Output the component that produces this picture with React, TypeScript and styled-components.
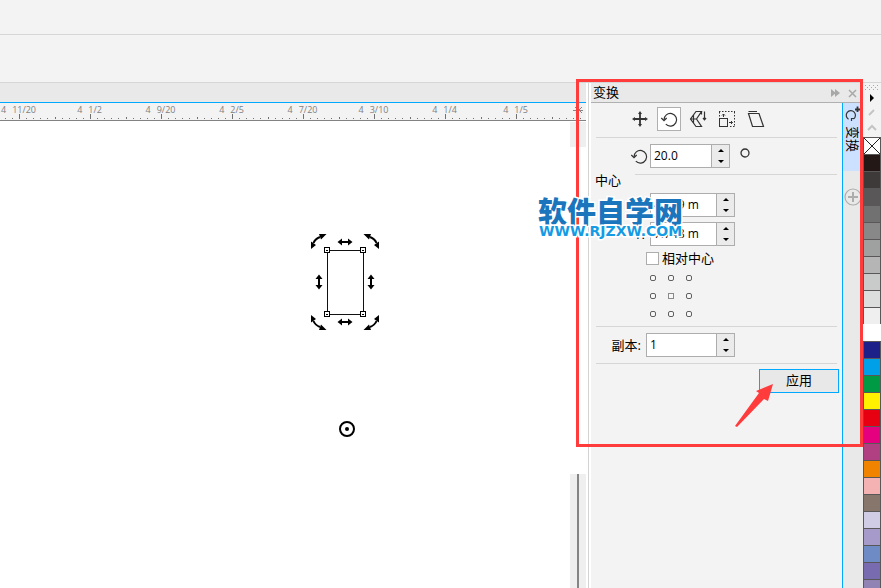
import React from "react";
import styled, { createGlobalStyle } from "styled-components";

const UI_FONT = '"Open Sans", "Noto Sans CJK SC", sans-serif';
const ACCENT = "#00a8ff";
const MARK = "#ff3b3b";

const GlobalStyle = createGlobalStyle`
  * { box-sizing: border-box; }
  body { margin: 0; background: #fff; font-family: ${UI_FONT}; font-size: 13px; color: #000; }
  button, input { font: inherit; color: inherit; padding: 0; margin: 0; border-radius: 0; }
  svg { display: block; }
`;

const Window = styled.div`
  display: flex;
  flex-direction: column;
  height: 100vh;
  overflow: hidden;
`;

const Bar = styled.div<{ $height: number }>`
  flex: none;
  height: ${(p) => p.$height}px;
  background: #f3f3f3;
  border-bottom: 1px solid #d6d6d6;
`;

const Workspace = styled.main`
  flex: 1;
  display: flex;
  min-height: 0;
`;

const Document = styled.section`
  flex: 1;
  min-width: 0;
  display: flex;
  flex-direction: column;
`;

const DocumentTabs = styled.div`
  flex: none;
  height: 20px;
  background: #e9e9e9;
  border-bottom: 1px solid ${ACCENT};
`;

const Ruler = styled.div`
  flex: none;
  display: flex;
  position: relative;
  height: 18px;
  overflow: hidden;
  background: #f3f3f3;
  border-bottom: 1px solid #828282;
`;

const RulerCell = styled.div`
  flex: none;
  width: 71px;
  height: 17px;

  &:first-child { margin-left: -16px; }
`;

const RulerLabel = styled.div`
  display: flex;
  justify-content: center;
  gap: 6px;
  height: 11px;
  padding-right: 2px;
  font-size: 9px;
  line-height: 13px;
  color: #808080;
`;

const RulerEnd = styled.svg`
  position: absolute;
  right: 2px;
  top: 3px;
`;

const Stage = styled.div`
  flex: 1;
  display: flex;
  min-height: 0;
`;

const Canvas = styled.div`
  flex: 1;
  position: relative;
  min-width: 0;
  overflow: hidden;
  background: #fff;
`;

const Drawing = styled.svg`
  position: absolute;
  left: 306px;
  top: 107px;
`;

const Scroll = styled.div`
  flex: none;
  display: flex;
  flex-direction: column;
  width: 16px;
  padding-top: 1px;
`;

const ScrollCap = styled.div`
  height: 25px;
  background: #efefef;
`;

const ScrollThumb = styled.div`
  height: 327px;
`;

const ScrollTrack = styled.div`
  flex: 1;
  display: flex;
  justify-content: center;
  background: #efefef;

  &::after {
    content: "";
    width: 2px;
    background: #858585;
  }
`;

const Docker = styled.aside`
  flex: none;
  position: relative;
  display: flex;
  width: 277px;
  padding-left: 2px;
`;

const Panel = styled.div`
  flex: 1;
  display: flex;
  flex-direction: column;
  background: #f3f3f3;
  border-left: 1px solid #d3d3d3;
  box-shadow: inset 2px 0 0 #fff;
  padding-left: 2px;
`;

const TitleBar = styled.header`
  flex: none;
  display: flex;
  align-items: center;
  height: 20px;
  padding-left: 2px;
  background: #e9e9e9;
  border-bottom: 1px solid #b0b0b0;
  line-height: 18px;
`;

const Title = styled.h1`
  flex: 1;
  margin: 0;
  padding-bottom: 2px;
  font-size: 13px;
  font-weight: 400;
`;

const TitleButton = styled.button`
  display: grid;
  place-items: center;
  width: 16px;
  height: 16px;
  border: 0;
  background: none;
`;

const CollapseButton = styled(TitleButton)`
  width: 13px;
`;

const Tools = styled.div`
  display: flex;
  gap: 5px;
  padding: 4px 0 6px 37px;
`;

const ToolButton = styled.button<{ $active?: boolean }>`
  display: grid;
  place-items: center;
  width: 24px;
  height: 24px;
  border: 1px solid ${(p) => (p.$active ? "#b0b0b0" : "transparent")};
  background: ${(p) => (p.$active ? "#fff" : "none")};
`;

const Rule = styled.hr`
  flex: 1 0 auto;
  height: 1px;
  margin: 0;
  border: 0;
  background: #d6d6d6;
`;

const RuleLine = styled.div`
  display: flex;
  padding: 0 5px;
`;

const Group = styled.div`
  display: flex;
  gap: 14px;
  height: 14px;
  padding: 0 5px 0 4px;
  line-height: 12px;
`;

const Row = styled.div`
  display: flex;
  align-items: center;
  margin: 6px 0;
`;

const Fields = styled.div`
  display: flex;
  flex-direction: column;
  gap: 5px;
  padding: 5px 0;
`;

const FieldRow = styled.div`
  display: flex;
  align-items: center;
`;

const RowLabel = styled.label<{ $width: number }>`
  flex: none;
  display: flex;
  justify-content: flex-end;
  width: ${(p) => p.$width}px;
  padding-right: 5px;
  line-height: 20px;

  svg { margin-right: -3px; }
`;

const Spin = styled.div<{ $width: number }>`
  display: flex;
  width: ${(p) => p.$width}px;
  height: 24px;
  border: 1px solid #adadad;
  background: #fff;
`;

const SpinInput = styled.input`
  flex: 1;
  min-width: 0;
  padding: 0 0 2px 3px;
  border: 0;
  outline: 0;
  background: none;
  font-size: 12px;
`;

const SpinButtons = styled.div`
  display: flex;
  flex-direction: column;
  width: 18px;
  border-left: 1px solid #adadad;
  background: #ebebeb;
`;

const SpinButton = styled.button`
  flex: 1;
  display: grid;
  place-items: center;
  border: 0;
  background: none;
`;

const Unit = styled.svg`
  margin: 0 0 6px 10px;
`;

const CheckRow = styled.div`
  display: flex;
  align-items: center;
  gap: 3px;
  height: 15px;
  margin-bottom: 3px;
  padding-left: 55px;
  line-height: 15px;
`;

const Check = styled.input`
  appearance: none;
  width: 13px;
  height: 13px;
  border: 1px solid #adadad;
  background: #fff;
`;

const Anchors = styled.div`
  display: grid;
  grid-template-columns: repeat(3, 18px);
  grid-auto-rows: 18px;
  margin-bottom: 3px;
  padding-left: 53px;
`;

const Anchor = styled.input<{ $square?: boolean }>`
  appearance: none;
  place-self: center;
  width: 6px;
  height: 6px;
  margin: 0;
  border: 1px solid ${(p) => (p.$square ? "#8a8a8a" : "#606060")};
  border-radius: ${(p) => (p.$square ? 0 : 2)}px;
  background: #f8f8f8;
`;

const Footer = styled.div`
  display: flex;
  justify-content: flex-end;
  padding: 5px 3px 0;
`;

const ApplyButton = styled.button`
  width: 80px;
  height: 24px;
  padding-bottom: 3px;
  border: 1px solid ${ACCENT};
  background: #e8e8e8;
  line-height: 18px;
`;

const TabStrip = styled.nav`
  flex: none;
  display: flex;
  flex-direction: column;
  width: 21px;
  background: #e9e9e9;
`;

const CloseSlot = styled.div`
  flex: none;
  height: 20px;
  padding: 2px 0 0 2px;
  border-bottom: 1px solid #b0b0b0;
`;

const TabList = styled.div`
  flex: 1;
  border-left: 1px solid ${ACCENT};
`;

const DockTab = styled.button`
  display: flex;
  flex-direction: column;
  align-items: center;
  width: 100%;
  height: 68px;
  padding: 2px 0 0;
  border: 0;
  background: #cce0ff;
`;

const TabText = styled.span`
  writing-mode: vertical-rl;
  text-orientation: sideways;
  line-height: 18px;
  margin-top: 3px;
`;

const AddTab = styled.button`
  display: block;
  margin-top: 17px;
  padding: 0 1px;
  border: 0;
  background: none;
`;

const Palette = styled.aside`
  flex: none;
  width: 18px;
  overflow: hidden;
  background: #f3f3f3;
`;

const PaletteHead = styled.div`
  height: 54px;
`;

const Swatch = styled.button<{ $color: string; $plain?: boolean }>`
  display: block;
  width: 18px;
  height: 17px;
  border: solid ${(p) => (p.$plain ? p.$color : "#595757")};
  border-width: 1px 1px 0;
  background: ${(p) => p.$color};
`;

const MarkFrame = styled.div`
  position: absolute;
  left: -10px;
  right: 0;
  top: -4px;
  height: 368px;
  border: 3px solid ${MARK};
  pointer-events: none;
`;

const MarkArrow = styled.svg`
  position: absolute;
  right: 88px;
  top: 300px;
  pointer-events: none;
`;

const Watermark = styled.div`
  position: absolute;
  left: -48px;
  top: 110px;
  white-space: nowrap;
  pointer-events: none;
  paint-order: stroke fill;
  -webkit-text-stroke: 3px #fff;
`;

const WatermarkName = styled.div`
  font: 900 29px/34px "Noto Sans CJK SC", sans-serif;
  color: #1b75bc;
`;

const WatermarkSite = styled.div`
  padding-left: 1px;
  font: 700 14px/8px "DejaVu Sans", sans-serif;
  color: #159be4;
`;

const RULER_MARKS = ["11/20", "1/2", "9/20", "2/5", "7/20", "3/10", "1/4", "1/5", ""];

const COLORS = [
  "#231815", "#3e3a39", "#595757", "#727171", "#888888", "#9fa0a0", "#b5b5b6", "#c9caca",
  "#dcdddd", "#efefef", "#ffffff", "#1d2088", "#00a0e9", "#009944", "#fff100", "#e60012",
  "#e4007f", "#b04082", "#f08300", "#f5b2b2", "#87766b", "#d0cce5", "#a59aca", "#6f8bc6",
  "#796baf", "#9184b5",
];

const RulerTicks = () => (
  <svg width="71" height="6" stroke="#707070" shapeRendering="crispEdges">
    <path d="M35.5 0V5M.5 3V5" />
    <path d="M7.5 4V5M14.5 4V5M21.5 4V5M28.5 4V5M42.5 4V5M49.5 4V5M56.5 4V5M63.5 4V5" />
  </svg>
);

const RotateIcon = () => (
  <svg width="18" height="18" viewBox="0 0 18 18" fill="none" stroke="#333" strokeWidth="1.2">
    <path d="M4 10A6.3 6.3 0 1 1 5.8 14.2" />
    <path d="M1.3 8L4 10.7L6.7 8" />
  </svg>
);

const MoveIcon = () => (
  <svg width="18" height="18" viewBox="0 0 18 18" fill="#333" stroke="#333">
    <path d="M9 3V15M3 9H15" strokeWidth="1.8" />
    <path d="M9 1L11 4H7ZM9 17L7 14H11ZM1 9L4 7V11ZM17 9L14 11V7Z" stroke="none" />
  </svg>
);

const MirrorIcon = () => (
  <svg width="18" height="18" viewBox="0 0 18 18" fill="none" stroke="#333" strokeWidth="1.2">
    <path d="M12.5 1.5H7L1.5 9L7 16.5H12.5L7.5 9ZM1.5 9H7.500M12.5 1.5V4.5M4.500 5L4.500 13" />
    <path d="M15.500 1.500V9.500M14 8L15.500 9.800L17 8" />
  </svg>
);

const SizeIcon = () => (
  <svg width="18" height="18" viewBox="0 0 18 18" fill="none" stroke="#333">
    <path d="M1 1.5H17M16.5 2V17M1.5 2V7M12 16.5H17" strokeDasharray="1.5 1.5" />
    <rect x="1.5" y="8.5" width="8" height="8" />
    <path d="M5.5 7V4M4 5.5L5.5 4L7 5.5M11 12.5H14.5M13 11L14.5 12.5L13 14" />
  </svg>
);

const SkewIcon = () => (
  <svg width="18" height="18" viewBox="0 0 18 18" fill="none" stroke="#333" strokeWidth="1.2">
    <path d="M1.5 3.5H12L16.5 16.5H5.5ZM1.5 1.5H10" />
  </svg>
);

const TOOLS = [
  { name: "位置", Icon: MoveIcon },
  { name: "旋转", Icon: RotateIcon, active: true },
  { name: "缩放和镜像", Icon: MirrorIcon },
  { name: "大小", Icon: SizeIcon },
  { name: "倾斜", Icon: SkewIcon },
];

const Spinner = ({ id, value, width }: { id: string; value: string; width: number }) => (
  <Spin $width={width}>
    <SpinInput id={id} defaultValue={value} />
    <SpinButtons>
      <SpinButton aria-label="增加">
        <svg width="6" height="3"><path d="M3 0L6 3H0Z" /></svg>
      </SpinButton>
      <SpinButton aria-label="减少">
        <svg width="6" height="3"><path d="M3 3L6 0H0Z" /></svg>
      </SpinButton>
    </SpinButtons>
  </Spin>
);

const Selection = () => (
  <Drawing width="80" height="220" viewBox="306 228 80 220">
    <defs>
      <g id="straight">
        <path d="M-5 0H5" stroke="#000" strokeWidth="2" />
        <path d="M-7.500 0L-3 -3.500V3.500ZM7.500 0L3 -3.500V3.500Z" />
      </g>
      <g id="curved">
        <path d="M320 237Q315 239 313.500 243" fill="none" stroke="#000" strokeWidth="2" />
        <path d="M326.500 234L319 234L321 239.500ZM311 249L311 241.500L316 245Z" />
      </g>
    </defs>
    <rect x="327.500" y="250.500" width="36" height="64" fill="none" stroke="#111" shapeRendering="crispEdges" />
    <g fill="#fff" stroke="#000" shapeRendering="crispEdges">
      <rect x="324.500" y="247.500" width="5" height="5" />
      <rect x="360.500" y="247.500" width="5" height="5" />
      <rect x="324.500" y="311.500" width="5" height="5" />
      <rect x="360.500" y="311.500" width="5" height="5" />
    </g>
    <path d="M326 250.500H328M362 250.500H364M326 314.500H328M362 314.500H364" stroke="#000" />
    <use href="#straight" transform="translate(345 242)" />
    <use href="#straight" transform="translate(345 322)" />
    <use href="#straight" transform="translate(319 282) rotate(90)" />
    <use href="#straight" transform="translate(371 282) rotate(90)" />
    <use href="#curved" />
    <use href="#curved" transform="translate(690 0) scale(-1 1)" />
    <use href="#curved" transform="translate(0 564) scale(1 -1)" />
    <use href="#curved" transform="translate(690 564) scale(-1 -1)" />
    <circle cx="347" cy="429" r="7" fill="none" stroke="#000" strokeWidth="2" />
    <circle cx="347" cy="429" r="2" />
  </Drawing>
);

export default function App() {
  return (
    <>
      <GlobalStyle />
      <Window>
        <Bar $height={35} />
        <Bar $height={48} />
        <Workspace>
          <Document>
            <DocumentTabs />
            <Ruler>
              {RULER_MARKS.map((mark) => (
                <RulerCell key={mark}>
                  <RulerLabel>
                    {mark && <span>4</span>}
                    <span>{mark}</span>
                  </RulerLabel>
                  <RulerTicks />
                </RulerCell>
              ))}
              <RulerEnd width="11" height="8" fill="none" stroke="#858585">
                <path d="M0 4.500H10M2 1L5 4L3 7M9 1L6 4L9 7" />
              </RulerEnd>
            </Ruler>
            <Stage>
              <Canvas>
                <Selection />
              </Canvas>
              <Scroll>
                <ScrollCap />
                <ScrollThumb />
                <ScrollTrack />
              </Scroll>
            </Stage>
          </Document>

          <Docker>
            <Panel>
              <TitleBar>
                <Title>变换</Title>
                <CollapseButton aria-label="折叠">
                  <svg width="9" height="8" fill="#a8a8a8"><path d="M0 0L5 4L0 8ZM4 0L9 4L4 8Z" /></svg>
                </CollapseButton>
              </TitleBar>
              <Tools>
                {TOOLS.map(({ name, Icon, active }) => (
                  <ToolButton key={name} $active={active} aria-label={name}>
                    <Icon />
                  </ToolButton>
                ))}
              </Tools>
              <RuleLine><Rule /></RuleLine>
              <Row>
                <RowLabel $width={59} htmlFor="angle" aria-label="角度"><RotateIcon /></RowLabel>
                <Spinner id="angle" value="20.0" width={80} />
                <Unit width="10" height="10" fill="none" stroke="#333" strokeWidth="1.300">
                  <circle cx="5" cy="5" r="4" />
                </Unit>
              </Row>
              <Group>
                <span>中心</span>
                <Rule />
              </Group>
              <Fields>
                <FieldRow>
                  <RowLabel $width={59} htmlFor="cx">X:</RowLabel>
                  <Spinner id="cx" value="4.289 m" width={85} />
                </FieldRow>
                <FieldRow>
                  <RowLabel $width={59} htmlFor="cy">Y:</RowLabel>
                  <Spinner id="cy" value="7.748 m" width={85} />
                </FieldRow>
              </Fields>
              <CheckRow>
                <Check type="checkbox" id="relative" />
                <label htmlFor="relative">相对中心</label>
              </CheckRow>
              <Anchors>
                {Array.from({ length: 9 }, (_, i) => (
                  <Anchor key={i} type="radio" name="anchor" $square={i === 4} aria-label={`锚点 ${i + 1}`} />
                ))}
              </Anchors>
              <RuleLine><Rule /></RuleLine>
              <Row>
                <RowLabel $width={55} htmlFor="copies">副本:</RowLabel>
                <Spinner id="copies" value="1" width={89} />
              </Row>
              <RuleLine><Rule /></RuleLine>
              <Footer>
                <ApplyButton>应用</ApplyButton>
              </Footer>
            </Panel>

            <TabStrip>
              <CloseSlot>
                <TitleButton aria-label="关闭">
                  <svg width="9" height="9" stroke="#a8a8a8" strokeWidth="1.500"><path d="M1 1L8 8M8 1L1 8" /></svg>
                </TitleButton>
              </CloseSlot>
              <TabList>
                <DockTab>
                  <svg width="18" height="18" fill="none" stroke="#333" strokeWidth="1.200">
                    <path d="M4.500 14.200A4.600 4.600 0 1 1 9.500 14M7.500 16V13.500H10.500" />
                    <path d="M13.500 1.500V7M11 4.500H16" strokeWidth="1.800" />
                  </svg>
                  <TabText>变换</TabText>
                </DockTab>
                <AddTab aria-label="添加">
                  <svg width="18" height="18" fill="none" stroke="#adadad">
                    <circle cx="9" cy="9" r="8" strokeWidth="1.200" />
                    <path d="M9 4V14M4 9H14" strokeWidth="2" />
                  </svg>
                </AddTab>
              </TabList>
            </TabStrip>

            <MarkFrame />
            <MarkArrow width="40" height="45" viewBox="735 383 40 45" fill={MARK}>
              <path d="M773 384L768 401L764 399L737 427L735 426L759 393L756 391Z" />
            </MarkArrow>
            <Watermark>
              <WatermarkName>软件自学网</WatermarkName>
              <WatermarkSite>WWW.RJZXW.COM</WatermarkSite>
            </Watermark>
          </Docker>

          <Palette>
            <PaletteHead>
              <svg width="18" height="54" viewBox="863 83 18 54" fill="none">
                <path d="M865 85.500H879M867 87.500H879M865 89.500H879" stroke="#a8a8a8" strokeDasharray="1 3" />
                <path d="M870 94L874 98L870 102Z" fill="#000" />
                <path d="M869 115L874 110" stroke="#c4c4c4" strokeWidth="2" />
                <path d="M868 130L872 126L876 130" stroke="#c4c4c4" strokeWidth="2" />
              </svg>
            </PaletteHead>
            <Swatch $color="#fefefe" aria-label="无填充">
              <svg width="16" height="16" stroke="#222"><path d="M0 0L16 16M16 0L0 16" /></svg>
            </Swatch>
            {COLORS.map((color) => (
              <Swatch key={color} $color={color} $plain={color === "#ffffff"} aria-label={color} />
            ))}
          </Palette>
        </Workspace>
      </Window>
    </>
  );
}
